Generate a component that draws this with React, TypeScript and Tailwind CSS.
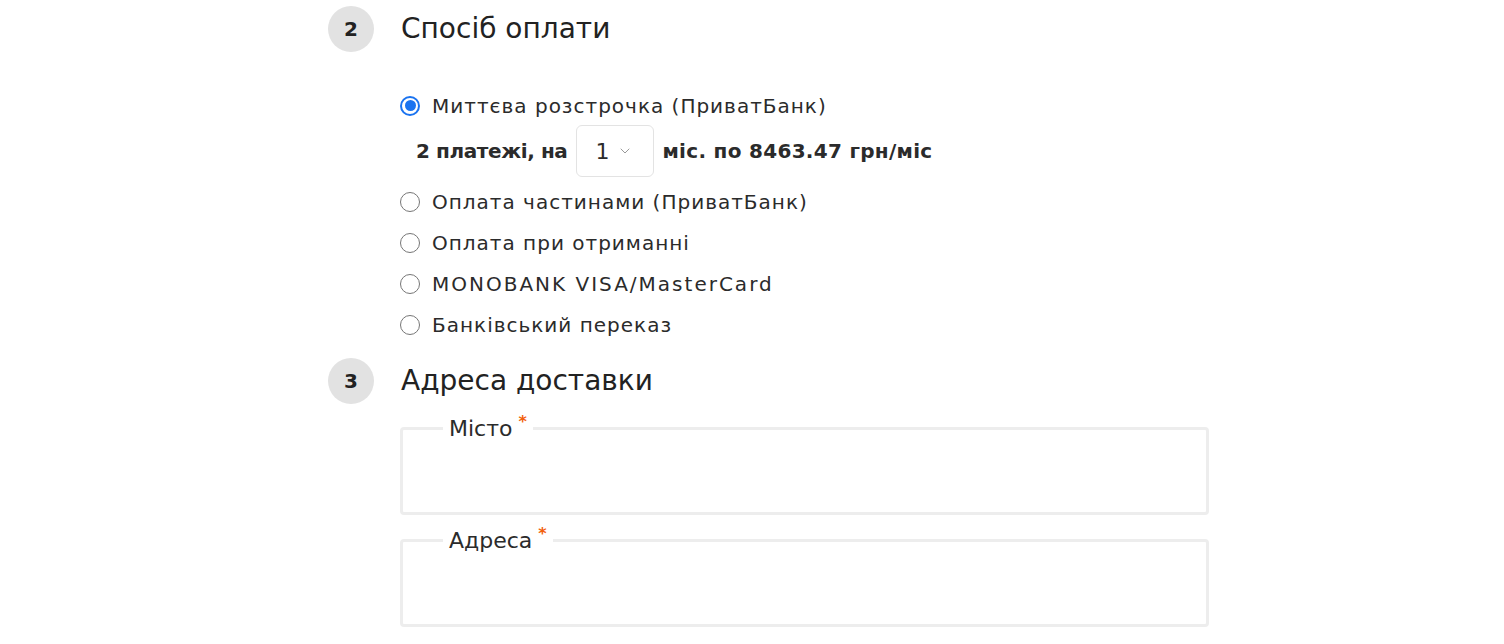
import { ChevronDown } from "lucide-react";

const font = { fontFamily: '"DejaVu Sans", sans-serif' };

function Badge({ n }: { n: number }) {
  return (
    <div className="flex h-[46px] w-[46px] shrink-0 items-center justify-center rounded-full bg-[#e2e2e2] text-[20px] font-bold text-[#222]">
      {n}
    </div>
  );
}

function Radio({
  checked,
  label,
  wide,
}: {
  checked?: boolean;
  label: string;
  wide?: boolean;
}) {
  return (
    <label className="flex h-[41px] items-center gap-[12px]">
      {checked ? (
        <span className="flex h-[20px] w-[20px] items-center justify-center rounded-full border-2 border-[#1a73f0] bg-white">
          <span className="h-[11px] w-[11px] rounded-full bg-[#1a73f0]" />
        </span>
      ) : (
        <span className="h-[20px] w-[20px] rounded-full border border-[#767676] bg-white" />
      )}
      <span
        className={
          wide
            ? "text-[20px] tracking-[2px] text-[#2b2b2b]"
            : "text-[20px] tracking-[1px] text-[#2b2b2b]"
        }
      >
        {label}
      </span>
    </label>
  );
}

function Field({ label }: { label: string }) {
  return (
    <fieldset className="rounded-[4px] border-[3px] border-[#ededed] px-[40px]">
      <legend className="px-[6px] pt-[4px] text-[22px] leading-[26px] text-[#2b2b2b]">
        {label}
        <span className="relative -top-[9px] ml-[6px] text-[16px] font-bold text-[#f2600c]">*</span>
      </legend>
      <div className="h-[68px]" />
    </fieldset>
  );
}

export default function App() {
  return (
    <div className="min-h-[644px] bg-white pl-[328px] pt-[6px]" style={font}>
      <div className="w-[881px]">
        <div className="flex items-center gap-[27px]">
          <Badge n={2} />
          <h2 className="text-[28px] text-[#222]">Спосіб оплати</h2>
        </div>
        <div className="mt-[33px] pl-[72px]">
          <Radio checked label="Миттєва розстрочка (ПриватБанк)" />
          <div className="flex h-[50px] items-center pl-[16px] text-[20px] font-bold text-[#2b2b2b]">
            <span className="tracking-[-0.4px]">2 платежі, на</span>
            <div className="ml-[9px] mr-[8px] flex h-[52px] w-[78px] items-center gap-[8px] rounded-[6px] border border-[#e3e3e3] pl-[18px] font-normal">
              <span className="text-[22px]">1</span>
              <ChevronDown size={16} strokeWidth={1.5} className="text-[#999]" />
            </div>
            <span className="tracking-[0.3px]">міс. по 8463.47 грн/міс</span>
          </div>
          <div className="mt-[5px]">
            <Radio label="Оплата частинами (ПриватБанк)" />
            <Radio label="Оплата при отриманні" />
            <Radio wide label="MONOBANK VISA/MasterCard" />
            <Radio label="Банківський переказ" />
          </div>
        </div>
        <div className="mt-[13px] flex items-center gap-[27px]">
          <Badge n={3} />
          <h2 className="text-[28px] text-[#222]">Адреса доставки</h2>
        </div>
        <div className="mt-[8px] flex flex-col gap-[9px] pl-[72px]">
          <Field label="Місто" />
          <Field label="Адреса" />
        </div>
      </div>
    </div>
  );
}
